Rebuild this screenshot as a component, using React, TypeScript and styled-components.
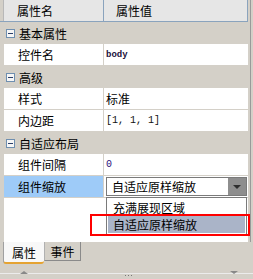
import React from "react";
import styled, { createGlobalStyle, css } from "styled-components";

const GlobalStyle = createGlobalStyle`
  html, body { margin: 0; padding: 0; background: #d4d0c8; }
  body { font-family: "Noto Sans CJK SC", "Liberation Sans", sans-serif; font-size: 12px; color: #000; }
`;

const Panel = styled.div`
  position: relative;
  width: 253px;
  height: 279px;
  display: flex;
  flex-direction: column;
  background: #d4d0c8;
  overflow: hidden;
`;

const Body = styled.div`
  display: flex;
  height: 242px;
`;

const Table = styled.div`
  width: 248px;
  display: flex;
  flex-direction: column;
`;

const Edge = styled.div`
  width: 5px;
  background: linear-gradient(to right, #d4d0c8 0 2px, #9a9a9a 2px 3px, #d4d0c8 3px);
`;

const Header = styled.div`
  display: grid;
  grid-template-columns: 4px 100px 1fr;
  height: 21px;
  border-bottom: 1px solid #8aa3bd;
  background: #e6e6e6;
  border-right: 1px solid #8aa3bd;
`;

const HeaderGutter = styled.div`
  background: #d4d0c8;
  border-right: 1px solid #b8b8b8;
`;

const HeaderCell = styled.div<{ $pad: number; $divider?: boolean }>`
  display: flex;
  align-items: center;
  padding-left: ${(p) => p.$pad}px;
  line-height: 1;
  ${(p) => p.$divider && css`border-right: 1px solid #8aa3bd;`}
`;

const GroupRow = styled.div`
  display: flex;
  align-items: center;
  height: 22px;
  background: #d4d0c8;
  padding-left: 6px;
  gap: 4px;
`;

const Minus = styled.div`
  box-sizing: border-box;
  width: 9px;
  height: 9px;
  border: 1px solid #6f8fb0;
  background: #f6f6f6;
  display: flex;
  align-items: center;
  justify-content: center;
  &::after {
    content: "";
    width: 5px;
    height: 1px;
    background: #2a3f6a;
  }
`;

const PropRow = styled.div`
  display: grid;
  grid-template-columns: 4px 100px 1fr;
  height: 21px;
  border-bottom: 1px solid #d4d0c8;
  background: #fff;
`;

const Gutter = styled.div`
  background: #d4d0c8;
`;

const Label = styled.div<{ $selected?: boolean }>`
  display: flex;
  align-items: center;
  padding-left: 14px;
  border-right: 1px solid #d4d0c8;
  background: ${(p) => (p.$selected ? "#9ecbf8" : "#fff")};
`;

const Value = styled.div`
  position: relative;
  display: flex;
  align-items: center;
  padding-left: 2px;
`;

const Mono = styled.span<{ $size: number; $color?: string; $bold?: boolean }>`
  font-family: "Liberation Mono", monospace;
  font-size: ${(p) => p.$size}px;
  font-weight: ${(p) => (p.$bold ? 700 : 400)};
  color: ${(p) => p.$color || "#000"};
`;

const Fill = styled.div`
  flex: 1;
  display: grid;
  grid-template-columns: 4px 100px 1fr;
  background: #fff;
`;

const FillCell = styled.div`
  border-right: 1px solid #fff;
`;

const Combo = styled.div`
  box-sizing: border-box;
  width: 141px;
  height: 19px;
  border: 1px solid #7a7a7a;
  background: #fff;
  display: flex;
  align-items: center;
`;

const ComboText = styled.div`
  flex: 1;
  padding-left: 5px;
  line-height: 1;
`;

const ComboButton = styled.div`
  width: 18px;
  height: 17px;
  background: #8e8e8e;
  display: flex;
  align-items: center;
  justify-content: center;
  &::after {
    content: "";
    border-left: 4px solid transparent;
    border-right: 4px solid transparent;
    border-top: 4px solid #2e2e2e;
  }
`;

const DropList = styled.div`
  position: absolute;
  left: 106px;
  top: 197px;
  width: 141px;
  box-sizing: border-box;
  border: 1px solid #7a7a7a;
  background: #fff;
  padding: 1px 0 1px;
`;

const DropItem = styled.div<{ $active?: boolean }>`
  height: 17px;
  display: flex;
  align-items: center;
  padding-left: 5px;
  margin: 0 1px;
  background: ${(p) => (p.$active ? "#aab4c8" : "transparent")};
`;

const Highlight = styled.div`
  position: absolute;
  left: 90px;
  top: 214px;
  width: 160px;
  height: 22px;
  box-sizing: border-box;
  border: 2px solid #ff0000;
`;

const TabBar = styled.div`
  display: flex;
  align-items: flex-start;
  height: 31px;
  padding-left: 3px;
`;

const Tab = styled.div<{ $active?: boolean }>`
  box-sizing: border-box;
  display: flex;
  align-items: center;
  justify-content: center;
  ${(p) =>
    p.$active
      ? css`
          width: 41px;
          height: 22px;
          background: #f8f8f8;
          border-left: 1px solid #a0a0a0;
          border-bottom: 2px solid #e5a332;
          border-radius: 0 0 3px 3px;
        `
      : css`
          width: 37px;
          height: 19px;
          background: #d4d0c8;
          border-right: 1px solid #8a8a8a;
          border-bottom: 1px solid #8a8a8a;
          border-left: 1px solid #b0b0b0;
        `}
`;

const BottomBar = styled.div`
  flex: 1;
  border-top: 1px solid #ececec;
  display: flex;
  align-items: flex-start;
  justify-content: space-between;
  padding: 0 15px 0 20px;
  position: relative;
`;

const Arrow = styled.div<{ $down?: boolean }>`
  margin-top: -3px;
  border-left: 4px solid transparent;
  border-right: 4px solid transparent;
  ${(p) =>
    p.$down
      ? css`border-top: 3px solid #888;`
      : css`border-bottom: 3px solid #888;`}
`;

const Dots = styled.div`
  margin-top: 1px;
  width: 9px;
  height: 1px;
  background: repeating-linear-gradient(to right, #777 0 1px, transparent 1px 3px);
`;

type Prop = { label: string; value?: React.ReactNode; selected?: boolean };
type Group = { title: string; props: Prop[] };

const groups: Group[] = [
  { title: "基本属性", props: [{ label: "控件名", value: <Mono $size={9} $bold $color="#1a0f3a">body</Mono> }] },
  {
    title: "高级",
    props: [
      { label: "样式", value: "标准" },
      { label: "内边距", value: <Mono $size={10} $color="#111">[1, 1, 1]</Mono> },
    ],
  },
  {
    title: "自适应布局",
    props: [
      { label: "组件间隔", value: <Mono $size={10} $color="#2a0f7a">0</Mono> },
      {
        label: "组件缩放",
        selected: true,
        value: (
          <Combo>
            <ComboText>自适应原样缩放</ComboText>
            <ComboButton />
          </Combo>
        ),
      },
    ],
  },
];

export default function App() {
  return (
    <>
      <GlobalStyle />
      <Panel>
        <Body>
          <Table>
            <Header>
              <HeaderGutter />
              <HeaderCell $pad={13} $divider>属性名</HeaderCell>
              <HeaderCell $pad={12}>属性值</HeaderCell>
            </Header>
            {groups.map((g) => (
              <React.Fragment key={g.title}>
                <GroupRow>
                  <Minus />
                  <span>{g.title}</span>
                </GroupRow>
                {g.props.map((p) => (
                  <PropRow key={p.label}>
                    <Gutter />
                    <Label $selected={p.selected}>{p.label}</Label>
                    <Value>{p.value}</Value>
                  </PropRow>
                ))}
              </React.Fragment>
            ))}
            <Fill>
              <Gutter />
              <FillCell />
              <FillCell />
            </Fill>
          </Table>
          <Edge />
        </Body>
        <TabBar>
          <Tab $active>属性</Tab>
          <Tab>事件</Tab>
        </TabBar>
        <BottomBar>
          <Arrow />
          <Dots />
          <Arrow $down />
        </BottomBar>
        <DropList>
          <DropItem>充满展现区域</DropItem>
          <DropItem $active>自适应原样缩放</DropItem>
        </DropList>
        <Highlight />
      </Panel>
    </>
  );
}
